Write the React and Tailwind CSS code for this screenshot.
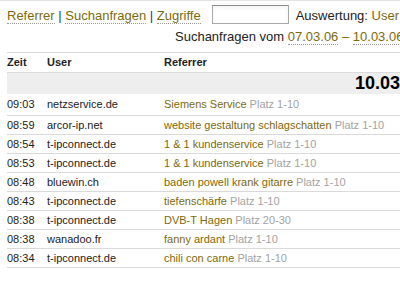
const rows = [
  ['09:03', 'netzservice.de', 'Siemens Service', 'Platz 1-10'],
  ['08:59', 'arcor-ip.net', 'website gestaltung schlagschatten', 'Platz 1-10'],
  ['08:54', 't-ipconnect.de', '1 & 1 kundenservice', 'Platz 1-10'],
  ['08:53', 't-ipconnect.de', '1 & 1 kundenservice', 'Platz 1-10'],
  ['08:48', 'bluewin.ch', 'baden powell krank gitarre', 'Platz 1-10'],
  ['08:43', 't-ipconnect.de', 'tiefenschärfe', 'Platz 1-10'],
  ['08:38', 't-ipconnect.de', 'DVB-T Hagen', 'Platz 20-30'],
  ['08:38', 'wanadoo.fr', 'fanny ardant', 'Platz 1-10'],
  ['08:34', 't-ipconnect.de', 'chili con carne', 'Platz 1-10'],
];

const NavLink = ({ children }) => (
  <span className="text-[#7d6a0c] border-b border-dotted border-[#9a9a9a]">
    {children}
  </span>
);

const Sep = () => <span className="text-[#1c3a8c]"> | </span>;

const App = () => {
  return (
    <div
      className="w-full h-[282px] overflow-hidden bg-white border-t border-[#e3e3e3] text-[#222]"
      style={{ fontFamily: '"Liberation Sans", Arial, sans-serif' }}
    >
      <div className="w-[440px] pl-[7px]">
        <div className="flex items-end pt-[4px] text-[13px]">
          <span className="leading-[16px] whitespace-pre">
            <NavLink>Referrer</NavLink>
            <Sep />
            <NavLink>Suchanfragen</NavLink>
            <Sep />
            <NavLink>Zugriffe</NavLink>
          </span>
          <input
            type="text"
            className="ml-[11px] w-[77px] h-[19px] bg-white border border-[#a8a8a8] border-t-[#8c8c8c] shadow-inner outline-0"
          />
          <span className="ml-[7px] leading-[16px] whitespace-pre">
            Auswertung: <span className="text-[#7d6a0c]">User</span>
          </span>
        </div>

        <div className="mt-[5px] pl-[168px] text-[13px] leading-[16px] whitespace-pre">
          Suchanfragen vom <NavLink>07.03.06</NavLink>
          <span className="text-[#7d6a0c]"> – </span>
          <NavLink>10.03.06</NavLink>
        </div>

        <div className="mt-[7px] border-t border-[#d6d6d6]">
          <div className="flex text-[11px] leading-[19px] font-bold">
            <div className="w-[40px]">Zeit</div>
            <div className="w-[117px]">User</div>
            <div>Referrer</div>
          </div>
          <div className="h-[22px] bg-[#eeeeee] border-t border-[#dcdcdc] pl-[348px] text-[18px] leading-[21px] font-bold text-black">
            10.03.06
          </div>
          {rows.map(([time, user, term, rank], i) => (
            <div
              key={i}
              className={`flex items-center box-border border-b border-[#dadada] text-[11px] ${
                i === 0 ? 'h-[22px]' : 'h-[19px]'
              }`}
            >
              <div className="w-[40px]">{time}</div>
              <div className="w-[117px]">{user}</div>
              <div className="whitespace-pre">
                <span className="text-[#7d6a0c]">{term}</span>{' '}
                <span className="text-[#a3a3a3]">{rank}</span>
              </div>
            </div>
          ))}
        </div>
      </div>
    </div>
  );
};

export default App;
